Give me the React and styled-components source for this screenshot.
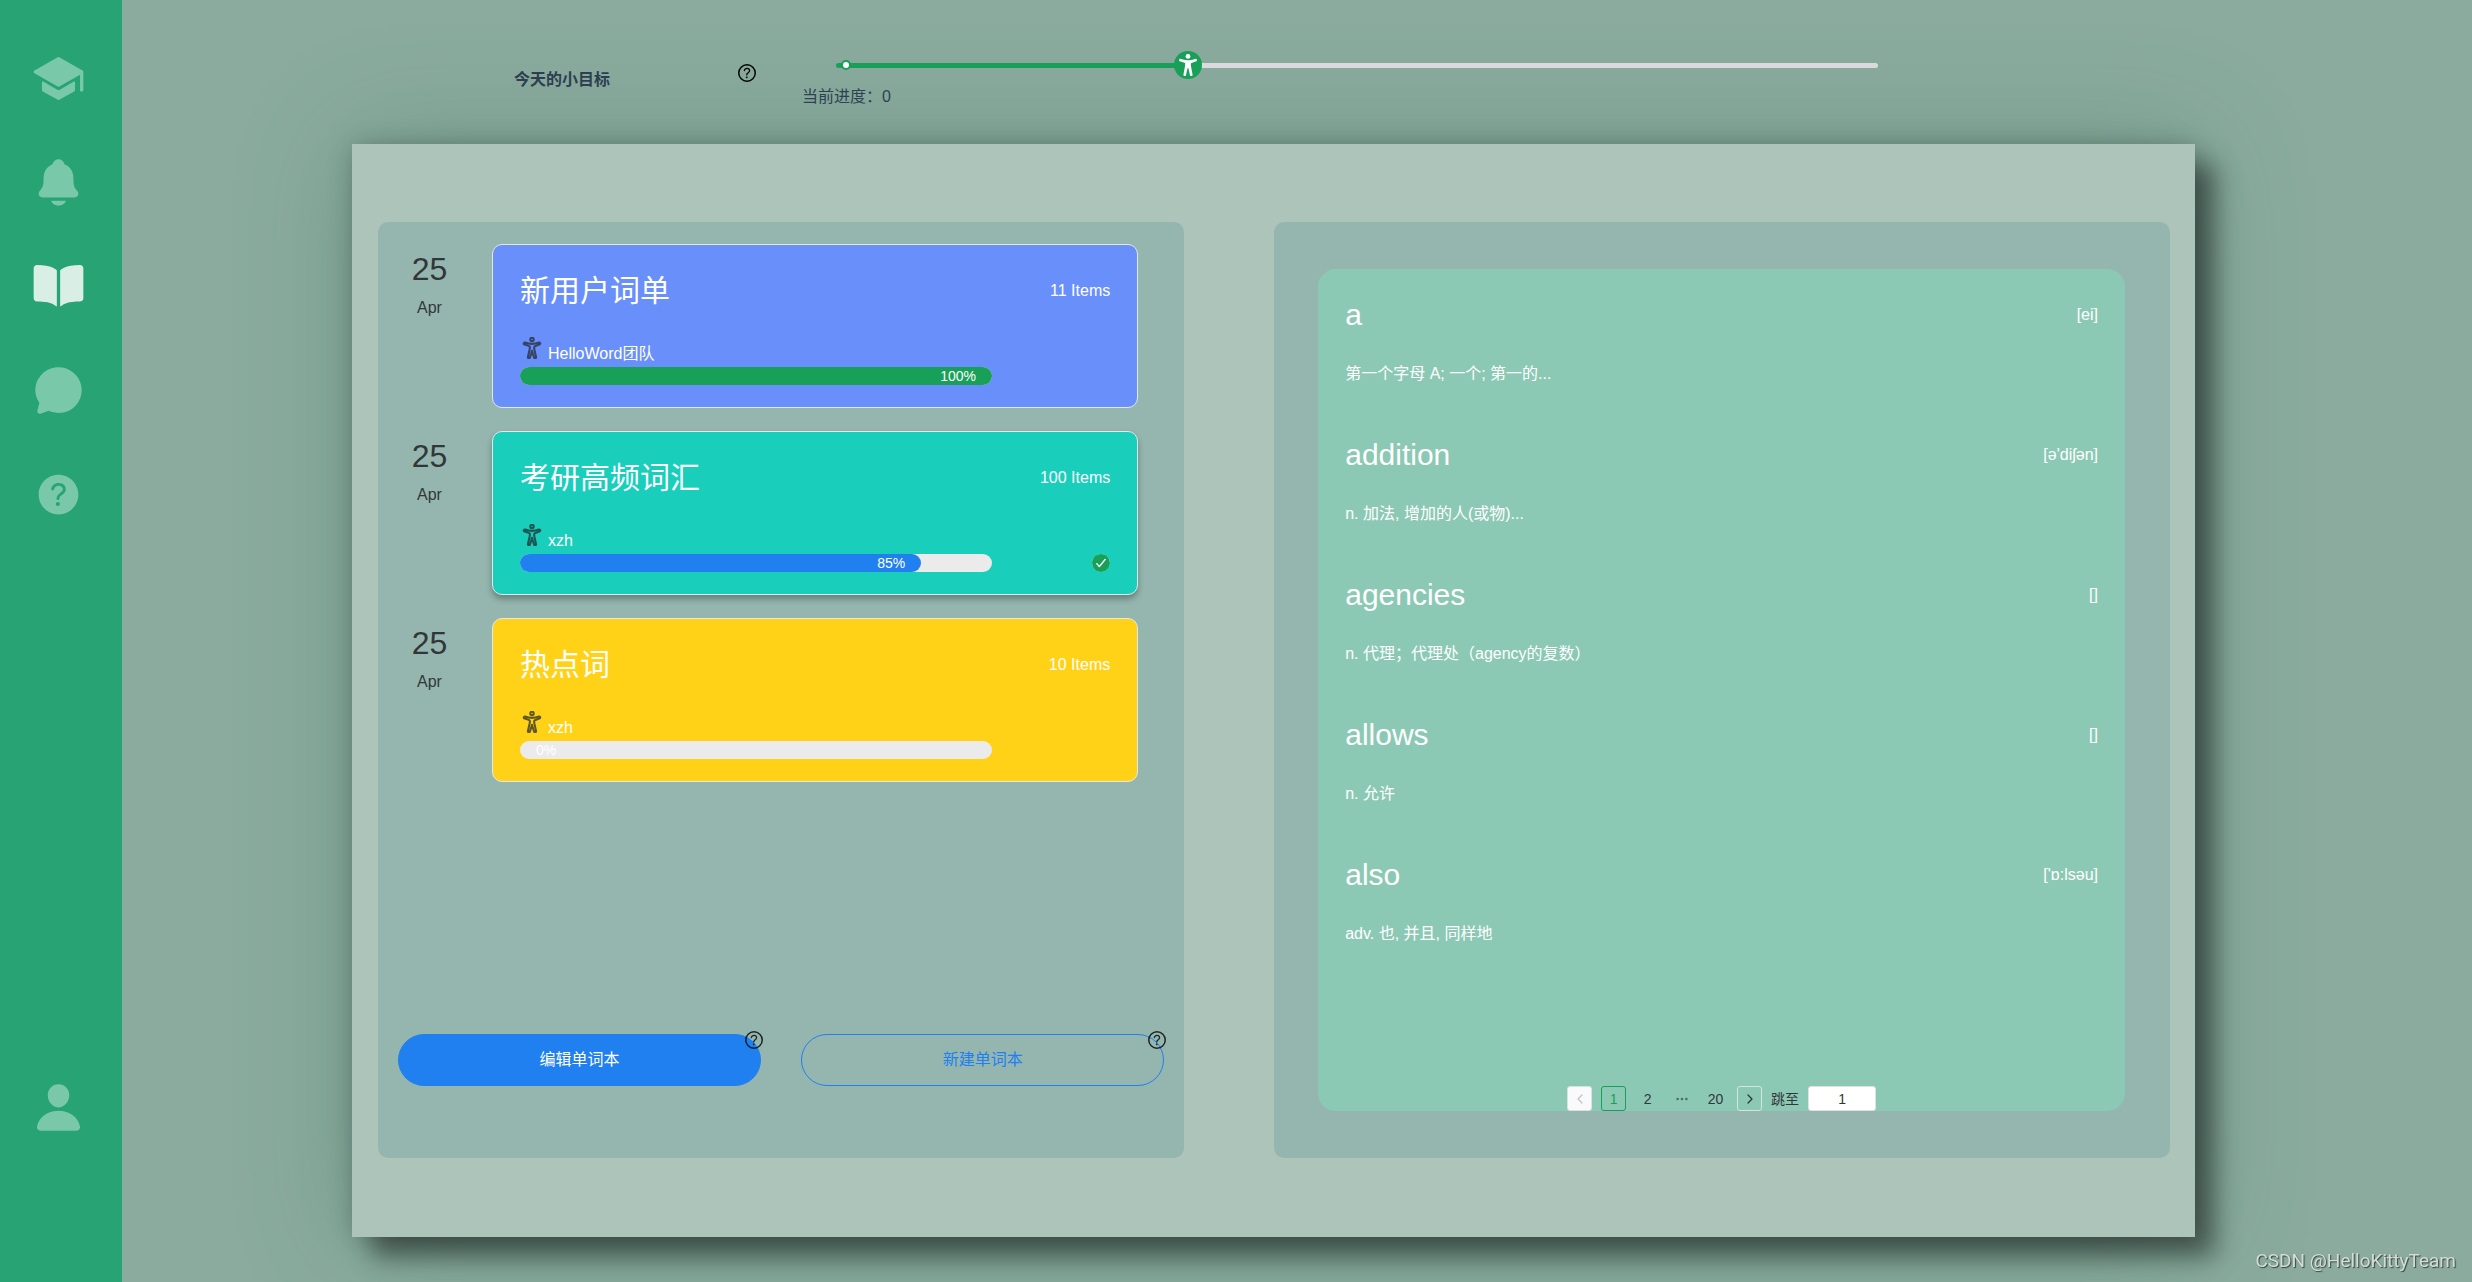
import React, { useState } from 'react'
import styled, { createGlobalStyle } from 'styled-components'
import {
    IoSchool,
    IoNotifications,
    IoBook,
    IoChatbubble,
    IoHelpCircle,
    IoPerson,
    IoHelpCircleOutline,
    IoAccessibility,
    IoAccessibilityOutline,
    IoCheckmarkCircle,
    IoChevronBack,
    IoChevronForward,
    IoEllipsisHorizontal,
} from 'react-icons/io5'

const GlobalStyle = createGlobalStyle`
    * {
        box-sizing: border-box;
    }
    body {
        margin: 0;
        background: #8aab9d;
        font-family: "Liberation Sans", "Noto Sans CJK SC", sans-serif;
        font-size: 16px;
    }
    button, input {
        font-family: inherit;
    }
`
const Page = styled.div`
    display: flex;
    min-height: 100vh;
`
const Sidebar = styled.nav`
    display: flex;
    flex-direction: column;
    align-items: center;
    gap: 50px;
    width: 122px;
    flex-shrink: 0;
    padding: 52px 6px 147px 0;
    background: #27a374;
`
const NavLink = styled.a`
    display: block;
    height: 54px;
    font-size: 53px;
    line-height: 0;
    color: ${({ $active }) => ($active ? '#d9efe5' : '#7ac8aa')};

    &:last-child {
        margin-top: auto;
    }
`
const Main = styled.main`
    display: flex;
    flex-direction: column;
    flex: 1;
    min-width: 0;
    padding: 0 277px 45px 230px;
`
const Header = styled.header`
    display: flex;
    height: 144px;
    padding-right: 317px;
    color: #2c3e50;
`
const Goal = styled.div`
    display: flex;
    justify-content: space-between;
    align-items: flex-start;
    width: 407px;
    padding: 61px 0 0 162px;
`
const GoalTitle = styled.label`
    padding-top: 7px;
    font-weight: bold;
    line-height: 24px;
`
const HelpButton = styled.button`
    padding: 0;
    border: none;
    background: none;
    color: #000;
    font-size: 24px;
    line-height: 0;
    cursor: pointer;
`
const GoalProgress = styled.div`
    flex: 1;
    padding: 51px 0 0 43px;
`
const SliderBox = styled.div`
    position: relative;
    height: 28px;
    margin-left: 34px;
`
const Slider = styled.input`
    display: block;
    width: 100%;
    height: 28px;
    margin: 0;
    appearance: none;
    background: none;
    cursor: pointer;

    &::-webkit-slider-runnable-track {
        height: 5px;
        border-radius: 3px;
        background: linear-gradient(to right, #18a058 ${({ $percent }) => $percent}%, #dbdbdf ${({ $percent }) => $percent}%);
    }
    &::-webkit-slider-thumb {
        appearance: none;
        width: 28px;
        height: 28px;
        margin-top: -12px;
        border-radius: 50%;
        background: #18a058;
    }
`
const SliderMark = styled.span`
    position: absolute;
    top: 9px;
    left: 5px;
    width: 10px;
    height: 10px;
    border: 2px solid #18a058;
    border-radius: 50%;
    background: #fff;
    pointer-events: none;
`
const SliderIcon = styled.span`
    position: absolute;
    top: 3px;
    width: 22px;
    margin-left: 3px;
    color: #fff;
    font-size: 22px;
    line-height: 0;
    pointer-events: none;
`
const ProgressText = styled.div`
    margin-top: 6px;
    line-height: 24px;
`
const Board = styled.section`
    display: grid;
    grid-template-columns: 9fr 10fr;
    gap: 90px;
    flex: 1;
    padding: 78px 25px 79px 26px;
    background: #adc4ba;
    box-shadow: 20px 20px 24px rgba(0, 0, 0, 0.45), 0 0 24px rgba(0, 0, 0, 0.2), 0 0 100px rgba(70, 120, 110, 0.4);
`
const Panel = styled.div`
    display: flex;
    flex-direction: column;
    border-radius: 10px;
    background: #94b6af;
`
const BookPanel = styled(Panel)`
    padding: 22px 0 72px;
`
const BookList = styled.ul`
    display: flex;
    flex-direction: column;
    gap: 23px;
    margin: 0;
    padding: 0 46px 0 0;
    list-style: none;
`
const BookRow = styled.li`
    display: flex;
    gap: 11px;
`
const BookDate = styled.time`
    width: 103px;
    padding-top: 7px;
    text-align: center;
    color: #333639;
`
const Day = styled.div`
    font-size: 32px;
    line-height: 36px;
`
const Month = styled.div`
    margin-top: 9px;
    line-height: 24px;
`
const BookCard = styled.article`
    flex: 1;
    padding: 22px 27px;
    border: 1px solid #e3e8ea;
    border-radius: 10px;
    background: ${({ $color }) => $color};
    box-shadow: ${({ $selected }) => ($selected ? '0 4px 6px rgba(0, 0, 0, 0.3)' : 'none')};
    color: #fff;
    cursor: pointer;
`
const TitleRow = styled.div`
    display: flex;
    justify-content: space-between;
    align-items: center;
    height: 48px;
`
const Title = styled.h2`
    margin: 0;
    font-size: 30px;
    font-weight: normal;
    line-height: 48px;
`
const Author = styled.div`
    display: flex;
    gap: 4px;
    height: 30px;
    margin-top: 22px;
`
const AuthorIcon = styled.span`
    width: 24px;
    padding: 0 1px;
    color: #1e2428;
    font-size: 22px;
    line-height: 0;
    opacity: 0.7;

    svg * {
        stroke-width: 48px;
    }
`
const AuthorName = styled.span`
    align-self: flex-end;
    line-height: 26px;
`
const ProgressRow = styled.div`
    display: flex;
    justify-content: space-between;
    height: 18px;
`
const Rail = styled.div`
    width: 84%;
    max-width: 472px;
    border-radius: 9px;
    background: #ebebeb;
`
const Fill = styled.div`
    min-width: max-content;
    padding: 0 16px;
    border-radius: 9px;
    background: ${({ $color }) => $color};
    font-size: 14px;
    line-height: 18px;
    text-align: right;
`
const CheckIcon = styled.span`
    display: flex;
    align-items: center;
    justify-content: center;
    width: 18px;
    border-radius: 50%;
    background: #fff;
    color: #18a058;
    font-size: 22px;

    svg {
        flex-shrink: 0;
    }
`
const Actions = styled.div`
    display: grid;
    grid-template-columns: 1fr 1fr;
    gap: 40px;
    margin-top: auto;
    padding: 0 20px;
`
const Action = styled.div`
    position: relative;
`
const ActionButton = styled.button`
    display: block;
    width: 100%;
    height: 52px;
    border: 1px solid #2080f0;
    border-radius: 26px;
    background: ${({ $primary }) => ($primary ? '#2080f0' : 'transparent')};
    color: ${({ $primary }) => ($primary ? '#fff' : '#2080f0')};
    font-size: 16px;
    line-height: 24px;
    cursor: pointer;
`
const ActionHelp = styled(HelpButton)`
    position: absolute;
    top: -6px;
    right: -5px;
    opacity: 0.8;
`
const WordPanel = styled(Panel)`
    padding: 47px 45px 47px 44px;
`
const WordCard = styled.div`
    display: flex;
    flex-direction: column;
    flex: 1;
    border-radius: 18px;
    background: #8cc9b4;
    color: #fff;
`
const WordList = styled.ul`
    margin: 0;
    padding: 0 27px;
    list-style: none;
`
const WordItem = styled.li`
    padding: 22px 0;
`
const Meaning = styled.p`
    margin: 22px 0 0;
    line-height: 26px;
`
const Pagination = styled.nav`
    display: flex;
    justify-content: center;
    align-items: center;
    gap: 9px;
    margin-top: auto;
    color: #333639;
    font-size: 14px;
    line-height: 20px;
`
const PageButton = styled.button`
    display: flex;
    align-items: center;
    justify-content: center;
    width: 25px;
    height: 25px;
    padding: 0;
    border: 1px solid ${({ $active, $framed }) => ($active ? '#18a058' : $framed ? '#d5e5dc' : 'transparent')};
    border-radius: 3px;
    background: none;
    color: ${({ $active }) => ($active ? '#18a058' : '#333639')};
    font-size: 14px;
    cursor: pointer;

    &:disabled {
        background: #fafafc;
        color: #c2c2c2;
        cursor: not-allowed;
    }
`
const Ellipsis = styled.span`
    display: flex;
    justify-content: center;
    width: 25px;
    color: #4f6f66;
    font-size: 14px;
`
const JumpInput = styled.input`
    width: 68px;
    height: 25px;
    padding: 0;
    border: 1px solid #e0e0e6;
    border-radius: 3px;
    background: #fff;
    color: #333639;
    font-size: 14px;
    text-align: center;
`
const Watermark = styled.div`
    position: fixed;
    right: 16px;
    bottom: 8px;
    color: #d3dcd8;
    font-family: Roboto, sans-serif;
    font-size: 19px;
    line-height: 26px;
    text-shadow: 1px 1px 1px rgba(0, 0, 0, 0.6);
`

const navItems = [
    { label: '学习', icon: IoSchool },
    { label: '通知', icon: IoNotifications },
    { label: '单词本', icon: IoBook, active: true },
    { label: '消息', icon: IoChatbubble },
    { label: '帮助', icon: IoHelpCircle },
    { label: '我的', icon: IoPerson },
]

const books = [
    { title: '新用户词单', items: 11, author: 'HelloWord团队', percent: 100, color: '#698ffa' },
    { title: '考研高频词汇', items: 100, author: 'xzh', percent: 85, color: '#19cebb', selected: true },
    { title: '热点词', items: 10, author: 'xzh', percent: 0, color: '#ffd218' },
]

const words = [
    { word: 'a', phonetic: 'ei', meaning: '第一个字母 A; 一个; 第一的...' },
    { word: 'addition', phonetic: "ə'diʃən", meaning: 'n. 加法, 增加的人(或物)...' },
    { word: 'agencies', phonetic: '', meaning: 'n. 代理；代理处（agency的复数）' },
    { word: 'allows', phonetic: '', meaning: 'n. 允许' },
    { word: 'also', phonetic: "'ɒ:lsəu", meaning: 'adv. 也, 并且, 同样地' },
]

const MAX_GOAL = 300

const fillColor = (percent) => {
    if (percent === 0) return 'transparent'
    return percent === 100 ? '#18a058' : '#2080f0'
}

const GoalSlider = () => {
    const [goal, setGoal] = useState(100)
    const ratio = goal / MAX_GOAL
    return (
        <SliderBox>
            <Slider
                id="goal"
                type="range"
                min="0"
                max={MAX_GOAL}
                value={goal}
                $percent={ratio * 100}
                onChange={(e) => setGoal(Number(e.target.value))}
            />
            <SliderMark />
            {/* the thumb is 28px wide and stays inside the rail */}
            <SliderIcon style={{ left: `calc((100% - 28px) * ${ratio})` }}>
                <IoAccessibility />
            </SliderIcon>
        </SliderBox>
    )
}

const Book = ({ book }) => (
    <BookRow>
        <BookDate dateTime="04-25">
            <Day>25</Day>
            <Month>Apr</Month>
        </BookDate>
        <BookCard $color={book.color} $selected={book.selected}>
            <TitleRow>
                <Title>{book.title}</Title>
                <span>{book.items} Items</span>
            </TitleRow>
            <Author>
                <AuthorIcon><IoAccessibilityOutline /></AuthorIcon>
                <AuthorName>{book.author}</AuthorName>
            </Author>
            <ProgressRow>
                <Rail>
                    <Fill $color={fillColor(book.percent)} style={{ width: `${book.percent}%` }}>
                        {book.percent}%
                    </Fill>
                </Rail>
                {book.selected && <CheckIcon><IoCheckmarkCircle /></CheckIcon>}
            </ProgressRow>
        </BookCard>
    </BookRow>
)

const App = () => {
    const [jump, setJump] = useState('1')
    return (
        <Page>
            <GlobalStyle />
            <Sidebar>
                {navItems.map(({ label, icon: Icon, active }) => (
                    <NavLink key={label} href="#" aria-label={label} $active={active}>
                        <Icon />
                    </NavLink>
                ))}
            </Sidebar>
            <Main>
                <Header>
                    <Goal>
                        <GoalTitle htmlFor="goal">今天的小目标</GoalTitle>
                        <HelpButton aria-label="目标说明"><IoHelpCircleOutline /></HelpButton>
                    </Goal>
                    <GoalProgress>
                        <GoalSlider />
                        <ProgressText>当前进度：0</ProgressText>
                    </GoalProgress>
                </Header>
                <Board>
                    <BookPanel>
                        <BookList>
                            {books.map((book) => <Book key={book.title} book={book} />)}
                        </BookList>
                        <Actions>
                            <Action>
                                <ActionButton $primary>编辑单词本</ActionButton>
                                <ActionHelp aria-label="编辑说明"><IoHelpCircleOutline /></ActionHelp>
                            </Action>
                            <Action>
                                <ActionButton>新建单词本</ActionButton>
                                <ActionHelp aria-label="新建说明"><IoHelpCircleOutline /></ActionHelp>
                            </Action>
                        </Actions>
                    </BookPanel>
                    <WordPanel>
                        <WordCard>
                            <WordList>
                                {words.map(({ word, phonetic, meaning }) => (
                                    <WordItem key={word}>
                                        <TitleRow>
                                            <Title>{word}</Title>
                                            <span>[{phonetic}]</span>
                                        </TitleRow>
                                        <Meaning>{meaning}</Meaning>
                                    </WordItem>
                                ))}
                            </WordList>
                            <Pagination>
                                <PageButton $framed disabled aria-label="上一页"><IoChevronBack /></PageButton>
                                <PageButton $active>1</PageButton>
                                <PageButton>2</PageButton>
                                <Ellipsis><IoEllipsisHorizontal /></Ellipsis>
                                <PageButton>20</PageButton>
                                <PageButton $framed aria-label="下一页"><IoChevronForward /></PageButton>
                                <label htmlFor="jump">跳至</label>
                                <JumpInput id="jump" value={jump} onChange={(e) => setJump(e.target.value)} />
                            </Pagination>
                        </WordCard>
                    </WordPanel>
                </Board>
            </Main>
            <Watermark>CSDN @HelloKittyTeam</Watermark>
        </Page>
    )
}

export default App
